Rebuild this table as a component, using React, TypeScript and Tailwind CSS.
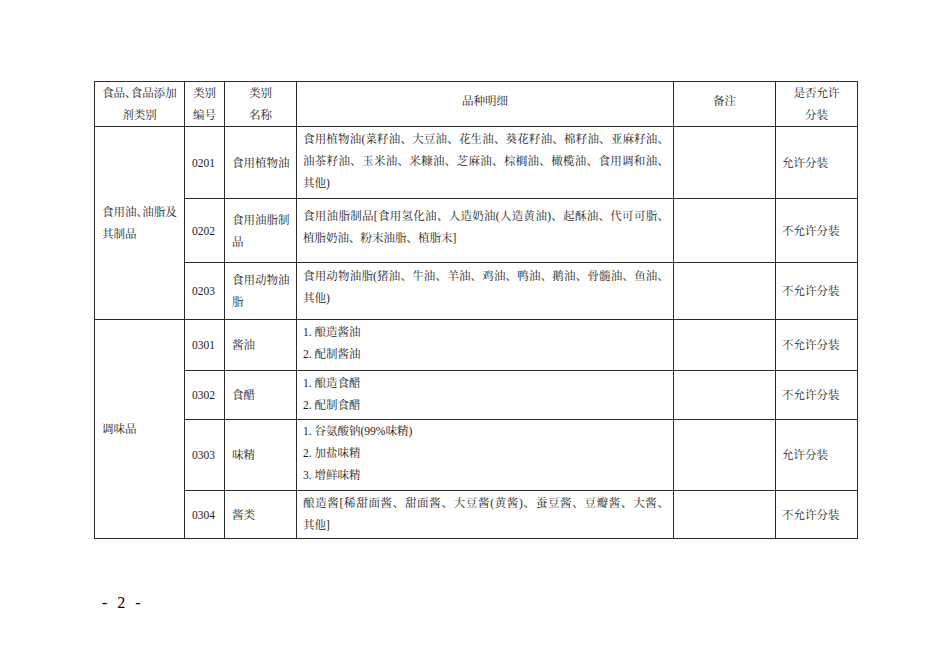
import React from "react";

type Row = {
  code: string;
  name: string[];
  detail: { text: string; full?: boolean }[];
  pack: string;
  h: string;
  pb: string;
};

const groups: { title: string[]; rows: Row[] }[] = [
  {
    title: ["食用油、油脂及", "其制品"],
    rows: [
      {
        code: "0201",
        name: ["食用植物油"],
        detail: [
          { text: "食用植物油(菜籽油、大豆油、花生油、葵花籽油、棉籽油、亚麻籽油、", full: true },
          { text: "油茶籽油、玉米油、米糠油、芝麻油、棕榈油、橄榄油、食用调和油、", full: true },
          { text: "其他)" },
        ],
        pack: "允许分装",
        h: "h-[72px]",
        pb: "pb-1",
      },
      {
        code: "0202",
        name: ["食用油脂制", "品"],
        detail: [
          { text: "食用油脂制品[食用氢化油、人造奶油(人造黄油)、起酥油、代可可脂、", full: true },
          { text: "植脂奶油、粉末油脂、植脂末]" },
        ],
        pack: "不允许分装",
        h: "h-[64px]",
        pb: "pb-2",
      },
      {
        code: "0203",
        name: ["食用动物油", "脂"],
        detail: [
          { text: "食用动物油脂(猪油、牛油、羊油、鸡油、鸭油、鹅油、骨髓油、鱼油、", full: true },
          { text: "其他)" },
        ],
        pack: "不允许分装",
        h: "h-[57px]",
        pb: "pb-2",
      },
    ],
  },
  {
    title: ["调味品"],
    rows: [
      {
        code: "0301",
        name: ["酱油"],
        detail: [{ text: "1. 酿造酱油" }, { text: "2. 配制酱油" }],
        pack: "不允许分装",
        h: "h-[51px]",
        pb: "pb-1",
      },
      {
        code: "0302",
        name: ["食醋"],
        detail: [{ text: "1. 酿造食醋" }, { text: "2. 配制食醋" }],
        pack: "不允许分装",
        h: "h-[49px]",
        pb: "pb-0.5",
      },
      {
        code: "0303",
        name: ["味精"],
        detail: [{ text: "1. 谷氨酸钠(99%味精)" }, { text: "2. 加盐味精" }, { text: "3. 增鲜味精" }],
        pack: "允许分装",
        h: "h-[71px]",
        pb: "pb-1",
      },
      {
        code: "0304",
        name: ["酱类"],
        detail: [
          { text: "酿造酱[稀甜面酱、甜面酱、大豆酱(黄酱)、蚕豆酱、豆瓣酱、大酱、", full: true },
          { text: "其他]" },
        ],
        pack: "不允许分装",
        h: "h-[48px]",
        pb: "pb-0.5",
      },
    ],
  },
];

const td = "border border-[#2a2a2a] align-middle leading-[22px] p-0";

export default function App() {
  return (
    <div className="min-h-[672px] w-[950px] bg-white pl-[94px] pt-[81px] font-['Liberation_Serif','Noto_Serif_CJK_SC','Noto_Sans_CJK_SC',serif] text-[11.5px] text-[#1c1c1c]">
      <table className="w-[763px] table-fixed border-collapse">
        <colgroup>
          <col className="w-[90px]" />
          <col className="w-[40px]" />
          <col className="w-[72px]" />
          <col className="w-[377px]" />
          <col className="w-[102px]" />
          <col className="w-[82px]" />
        </colgroup>
        <thead>
          <tr className="h-[45px]">
            <th className={`${td} px-1 text-center font-normal whitespace-nowrap [font-feature-settings:'halt']`}>
              <div>食品、食品添加</div>
              <div>剂类别</div>
            </th>
            <th className={`${td} text-center font-normal`}>
              <div>类别</div>
              <div>编号</div>
            </th>
            <th className={`${td} text-center font-normal`}>
              <div>类别</div>
              <div>名称</div>
            </th>
            <th className={`${td} pb-1.5 text-center font-normal`}>品种明细</th>
            <th className={`${td} pb-1.5 text-center font-normal`}>备注</th>
            <th className={`${td} text-center font-normal`}>
              <div>是否允许</div>
              <div>分装</div>
            </th>
          </tr>
        </thead>
        <tbody>
          {groups.map((g) =>
            g.rows.map((r, i) => (
              <tr key={r.code} className={r.h}>
                {i === 0 && (
                  <td
                    rowSpan={g.rows.length}
                    className={`${td} pl-[7px] whitespace-nowrap [font-feature-settings:'halt']`}
                  >
                    {g.title.map((t) => (
                      <div key={t}>{t}</div>
                    ))}
                  </td>
                )}
                <td className={`${td} pl-[7px]`}>{r.code}</td>
                <td className={`${td} pl-[7px] whitespace-nowrap`}>
                  {r.name.map((n) => (
                    <div key={n}>{n}</div>
                  ))}
                </td>
                <td className={`${td} pl-[6px] pr-[4px] whitespace-nowrap ${r.pb}`}>
                  {r.detail.map((d) => (
                    <div
                      key={d.text}
                      className={d.full ? "text-justify [text-align-last:justify]" : ""}
                    >
                      {d.text}
                    </div>
                  ))}
                </td>
                <td className={td}></td>
                <td className={`${td} pl-[6px] whitespace-nowrap`}>{r.pack}</td>
              </tr>
            ))
          )}
        </tbody>
      </table>
      <div className="mt-[52px] pl-[8px] text-[16px] tracking-[3px] font-['Liberation_Serif',serif] text-black">
        - 2 -
      </div>
    </div>
  );
}
